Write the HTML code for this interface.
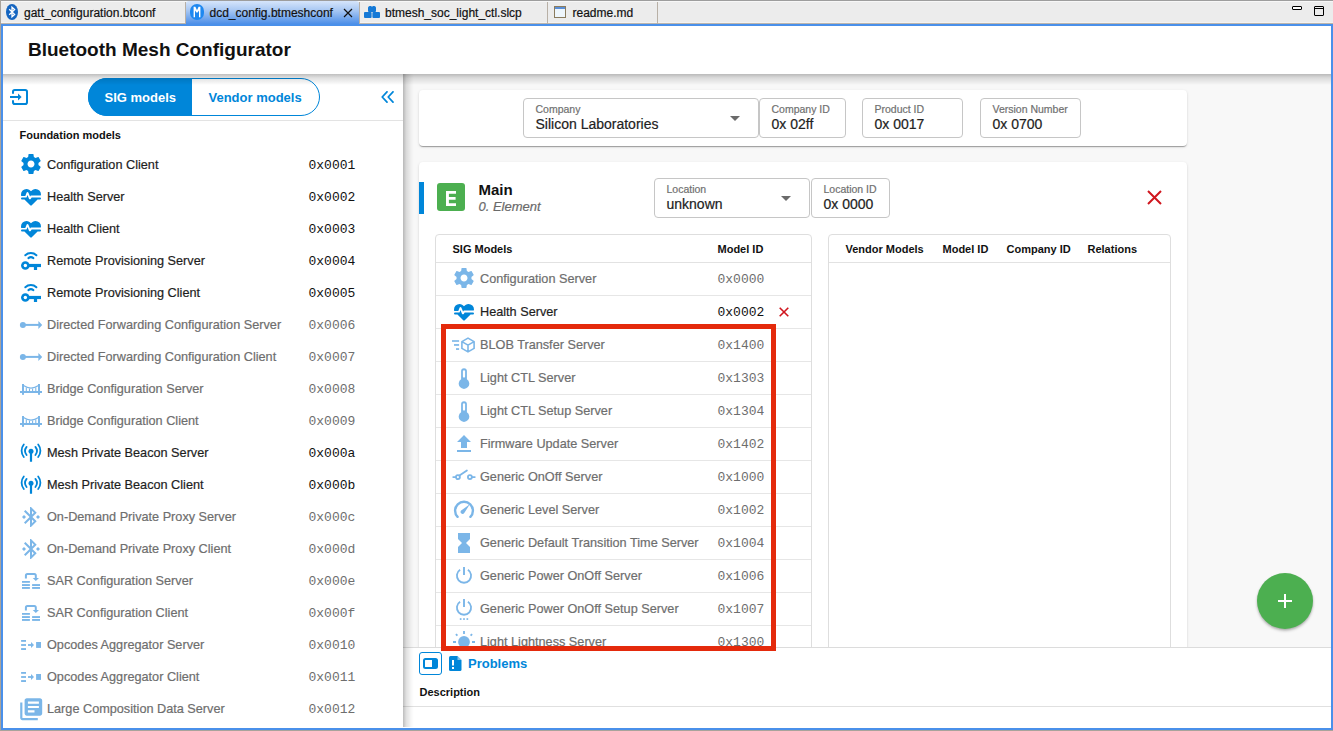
<!DOCTYPE html><html><head><meta charset="utf-8"><title>Bluetooth Mesh Configurator</title><style>
html,body{margin:0;padding:0}
body{width:1333px;height:731px;position:relative;overflow:hidden;background:#ececec;font-family:"Liberation Sans",sans-serif}
.a{position:absolute;display:block}
.t{position:absolute;white-space:nowrap}
.n{-webkit-text-stroke:0.2px currentColor}
</style></head><body>
<div class="a" style="left:0px;top:0px;width:1333px;height:731px;background:#ececec"></div>
<div class="a" style="left:0px;top:0px;width:1333px;height:1px;background:#9d9d9d"></div>
<div class="a" style="left:1px;top:1px;width:1332px;height:1px;background:#f7f7f7"></div>
<div class="a" style="left:0px;top:0px;width:1px;height:731px;background:#a9a39b"></div>
<div class="a" style="left:0px;top:730px;width:1333px;height:1px;background:#a9a39b"></div>
<div class="a" style="left:1px;top:22px;width:1332px;height:1px;background:#f3f3f3"></div>
<div class="a" style="left:1px;top:23px;width:1332px;height:1px;background:#bdb5ab"></div>
<div class="a" style="left:185px;top:2px;width:1px;height:22px;background:#b8b0a6"></div>
<div class="a" style="left:359px;top:2px;width:1px;height:22px;background:#b8b0a6"></div>
<div class="a" style="left:547px;top:2px;width:1px;height:22px;background:#b8b0a6"></div>
<div class="a" style="left:657px;top:2px;width:1px;height:22px;background:#b8b0a6"></div>
<div class="a" style="left:186px;top:1px;width:173px;height:23px;background:linear-gradient(#d6e5fb 0%,#a9c8f3 40%,#4d8fe8 100%);border-top-left-radius:3px;border-top-right-radius:3px"></div>
<svg class="a" style="left:6px;top:4px;" width="12" height="16" viewBox="0 0 12 16"><ellipse cx="6" cy="8" rx="6" ry="8" fill="#1565c0"/><path d="M3.2 5.3L8.6 10.4L6 12.8V3.2L8.6 5.6L3.2 10.7" fill="none" stroke="#fff" stroke-width="1.3"/></svg>
<div class="t n" style="left:24px;top:7px;font-size:12px;line-height:12px;font-weight:normal;font-style:normal;color:#111;font-family:'Liberation Sans', sans-serif;">gatt_configuration.btconf</div>
<svg class="a" style="left:190px;top:4px;" width="14" height="16" viewBox="0 0 14 16"><rect x="0" y="0" width="14" height="16" rx="7" ry="7" fill="#1e88f0"/><path d="M3.6 13.2V2.8H5.4L7 6.3L8.6 2.8H10.4V13.2H9V6.6L7.6 8.6H6.4L5 6.6V13.2Z" fill="#fff"/></svg>
<div class="t n" style="left:209.5px;top:7px;font-size:12px;line-height:12px;font-weight:normal;font-style:normal;color:#111;font-family:'Liberation Sans', sans-serif;">dcd_config.btmeshconf</div>
<svg class="a" style="left:343px;top:8px;" width="10" height="10" viewBox="0 0 10 10"><path d="M1 1L9 9M9 1L1 9" stroke="#111" stroke-width="1.2"/></svg>
<svg class="a" style="left:364px;top:6px;" width="16" height="12" viewBox="0 0 16 12"><rect x="4" y="0.6" width="8" height="5.4" rx="1" fill="#1579d6"/><rect x="0" y="6" width="7.6" height="6" rx="1" fill="#1579d6"/><rect x="8.4" y="6" width="7.6" height="6" rx="1" fill="#1579d6"/><rect x="5.2" y="0" width="2" height="1.2" fill="#1579d6"/><rect x="8.8" y="0" width="2" height="1.2" fill="#1579d6"/></svg>
<div class="t n" style="left:385px;top:7px;font-size:12px;line-height:12px;font-weight:normal;font-style:normal;color:#111;font-family:'Liberation Sans', sans-serif;">btmesh_soc_light_ctl.slcp</div>
<svg class="a" style="left:554px;top:6px;" width="12" height="12" viewBox="0 0 12 12"><rect x="0.5" y="0.5" width="11" height="11" fill="#eef6fc" stroke="#8a7b5e"/><rect x="1" y="1" width="10" height="2" fill="#5b8fd6"/></svg>
<div class="t n" style="left:572.5px;top:7px;font-size:12px;line-height:12px;font-weight:normal;font-style:normal;color:#111;font-family:'Liberation Sans', sans-serif;">readme.md</div>
<div class="a" style="left:1292px;top:6px;width:10px;height:4px;box-sizing:border-box;border:1.3px solid #000;background:#fff;border-radius:1px"></div>
<div class="a" style="left:1314px;top:6px;width:10px;height:10px;box-sizing:border-box;border:1.3px solid #000;background:#ececec;border-radius:1px"></div>
<div class="a" style="left:1315px;top:8.3px;width:8px;height:1.2px;background:#000"></div>
<div class="a" style="left:1px;top:24px;width:1332px;height:706px;box-sizing:border-box;border:2px solid #4a90ea;background:#fff"></div>
<div class="a" style="left:403px;top:74px;width:928px;height:573px;background:#f8f8f8"></div>
<div class="a" style="left:403px;top:647px;width:928px;height:80px;background:#fff;border-top:1px solid #dcdcdc;box-sizing:border-box"></div>
<div class="a" style="left:403px;top:706px;width:928px;height:1px;background:#e0e0e0"></div>
<div class="a" style="left:403px;top:74px;width:928px;height:573px;overflow:hidden;"><div class="a" style="left:-403px;top:-74px;width:1333px;height:731px">
<div class="a" style="left:419px;top:90px;width:768px;height:56px;background:#fff;border-radius:4px;box-shadow:0 2px 1px -1px rgba(0,0,0,.2),0 1px 1px 0 rgba(0,0,0,.14),0 1px 3px 0 rgba(0,0,0,.12)"></div>
<div class="a" style="left:523px;top:98px;width:236px;height:40px;box-sizing:border-box;border:1px solid #c6c6c6;border-radius:4px;background:#fff"></div>
<div class="t n" style="left:535.5px;top:104px;font-size:10.5px;line-height:10.5px;font-weight:normal;font-style:normal;color:#707070;font-family:'Liberation Sans', sans-serif;">Company</div>
<div class="t n" style="left:535.5px;top:117px;font-size:14px;line-height:14px;font-weight:normal;font-style:normal;color:#222;font-family:'Liberation Sans', sans-serif;">Silicon Laboratories</div>
<svg class="a" style="left:730px;top:115.5px;" width="10" height="5" viewBox="0 0 10 5"><path d="M0 0H10L5 5Z" fill="#6b6b6b"/></svg>
<div class="a" style="left:759px;top:98px;width:87px;height:40px;box-sizing:border-box;border:1px solid #c6c6c6;border-radius:4px;background:#fff"></div>
<div class="t n" style="left:771.5px;top:104px;font-size:10.5px;line-height:10.5px;font-weight:normal;font-style:normal;color:#707070;font-family:'Liberation Sans', sans-serif;">Company ID</div>
<div class="t n" style="left:771.5px;top:117px;font-size:14px;line-height:14px;font-weight:normal;font-style:normal;color:#222;font-family:'Liberation Sans', sans-serif;">0x 02ff</div>
<div class="a" style="left:862px;top:98px;width:101px;height:40px;box-sizing:border-box;border:1px solid #c6c6c6;border-radius:4px;background:#fff"></div>
<div class="t n" style="left:874.5px;top:104px;font-size:10.5px;line-height:10.5px;font-weight:normal;font-style:normal;color:#707070;font-family:'Liberation Sans', sans-serif;">Product ID</div>
<div class="t n" style="left:874.5px;top:117px;font-size:14px;line-height:14px;font-weight:normal;font-style:normal;color:#222;font-family:'Liberation Sans', sans-serif;">0x 0017</div>
<div class="a" style="left:980px;top:98px;width:101px;height:40px;box-sizing:border-box;border:1px solid #c6c6c6;border-radius:4px;background:#fff"></div>
<div class="t n" style="left:992.5px;top:104px;font-size:10.5px;line-height:10.5px;font-weight:normal;font-style:normal;color:#707070;font-family:'Liberation Sans', sans-serif;">Version Number</div>
<div class="t n" style="left:992.5px;top:117px;font-size:14px;line-height:14px;font-weight:normal;font-style:normal;color:#222;font-family:'Liberation Sans', sans-serif;">0x 0700</div>
<div class="a" style="left:419px;top:162px;width:768px;height:700px;background:#fff;border-radius:4px;box-shadow:0 2px 1px -1px rgba(0,0,0,.2),0 1px 1px 0 rgba(0,0,0,.14),0 1px 3px 0 rgba(0,0,0,.12)"></div>
<div class="a" style="left:419px;top:182px;width:5px;height:32px;background:#0086d9"></div>
<div class="a" style="left:437px;top:183px;width:28px;height:28px;background:#4caf50;border-radius:3px"></div>
<svg class="a" style="left:445.5px;top:190.5px;" width="10.5" height="15" viewBox="0 0 10.5 15"><path d="M0 0H10.5V2.7H2.9V6.1H9.6V8.8H2.9V12.3H10.5V15H0Z" fill="#fff"/></svg>
<div class="t" style="left:478.5px;top:182px;font-size:15px;line-height:15px;font-weight:bold;font-style:normal;color:#111;font-family:'Liberation Sans', sans-serif;">Main</div>
<div class="t n" style="left:478.5px;top:200px;font-size:13px;line-height:13px;font-weight:normal;font-style:italic;color:#6a6a6a;font-family:'Liberation Sans', sans-serif;">0. Element</div>
<div class="a" style="left:654px;top:178px;width:156px;height:40px;box-sizing:border-box;border:1px solid #c6c6c6;border-radius:4px;background:#fff"></div>
<div class="t n" style="left:666.5px;top:184px;font-size:10.5px;line-height:10.5px;font-weight:normal;font-style:normal;color:#707070;font-family:'Liberation Sans', sans-serif;">Location</div>
<div class="t n" style="left:666.5px;top:197px;font-size:14px;line-height:14px;font-weight:normal;font-style:normal;color:#222;font-family:'Liberation Sans', sans-serif;">unknown</div>
<svg class="a" style="left:781px;top:195.5px;" width="10" height="5" viewBox="0 0 10 5"><path d="M0 0H10L5 5Z" fill="#6b6b6b"/></svg>
<div class="a" style="left:811px;top:178px;width:79px;height:40px;box-sizing:border-box;border:1px solid #c6c6c6;border-radius:4px;background:#fff"></div>
<div class="t n" style="left:823.5px;top:184px;font-size:10.5px;line-height:10.5px;font-weight:normal;font-style:normal;color:#707070;font-family:'Liberation Sans', sans-serif;">Location ID</div>
<div class="t n" style="left:823.5px;top:197px;font-size:14px;line-height:14px;font-weight:normal;font-style:normal;color:#222;font-family:'Liberation Sans', sans-serif;">0x 0000</div>
<svg class="a" style="left:1147px;top:190px;" width="15" height="15" viewBox="0 0 15 15"><path d="M1 1L14 14M14 1L1 14" stroke="#d0161e" stroke-width="2"/></svg>
<div class="a" style="left:435px;top:234px;width:377px;height:500px;box-sizing:border-box;border:1px solid #dedede;border-radius:4px;background:#fff"></div>
<div class="t" style="left:452.5px;top:244px;font-size:11px;line-height:11px;font-weight:bold;font-style:normal;color:#111;font-family:'Liberation Sans', sans-serif;">SIG Models</div>
<div class="t" style="left:717.5px;top:244px;font-size:11px;line-height:11px;font-weight:bold;font-style:normal;color:#111;font-family:'Liberation Sans', sans-serif;">Model ID</div>
<div class="a" style="left:436px;top:262px;width:375px;height:1px;background:#e2e2e2"></div>
<div class="a" style="left:436px;top:295px;width:375px;height:1px;background:#e6e6e6"></div>
<svg class="a" style="left:452px;top:266px" width="24" height="24" viewBox="0 0 24 24" fill="#7bb6e8" stroke="#7bb6e8" stroke-width="0"><path d="M19.43 12.98c.04-.32.07-.64.07-.98s-.03-.66-.07-.98l2.11-1.65c.19-.15.24-.42.12-.64l-2-3.46c-.12-.22-.39-.3-.61-.22l-2.49 1c-.52-.4-1.08-.73-1.69-.98l-.38-2.65C14.460 2.18 14.25 2 14 2h-4c-.25 0-.46.18-.49.42l-.38 2.650c-.61.25-1.17.59-1.69.98l-2.49-1c-.23-.09-.49 0-.61.22l-2 3.46c-.13.22-.07.49.12.64l2.11 1.65c-.04.32-.07.65-.07.98s.03.66.07.98l-2.11 1.65c-.19.15-.24.42-.12.64l2 3.46c.12.22.39.3.61.22l2.49-1c.52.4 1.08.73 1.69.98l.38 2.65c.03.24.24.42.49.42h4c.25 0 .46-.18.49-.42l.38-2.65c.61-.25 1.17-.59 1.690-.98l2.49 1c.23.09.49 0 .61-.22l2-3.46c.12-.22.07-.49-.12-.64l-2.11-1.65zM12 15.5c-1.93 0-3.5-1.57-3.5-3.5s1.57-3.5 3.5-3.5 3.5 1.57 3.5 3.5-1.57 3.5-3.5 3.5z"/></svg>
<div class="t n" style="left:480px;top:273px;font-size:12.7px;line-height:12.7px;font-weight:normal;font-style:normal;color:#6e6e6e;font-family:'Liberation Sans', sans-serif;">Configuration Server</div>
<div class="t" style="left:717.5px;top:273px;font-size:13px;line-height:13px;font-weight:normal;font-style:normal;color:#6e6e6e;font-family:'Liberation Mono', monospace;">0x0000</div>
<div class="a" style="left:436px;top:328px;width:375px;height:1px;background:#e6e6e6"></div>
<svg class="a" style="left:452px;top:299px" width="24" height="24" viewBox="0 0 24 24" fill="#0086d9" stroke="#0086d9" stroke-width="0"><g transform="translate(0,1)"><path d="M7.5,4A5.5,5.5 0 0,0 2,9.5C2,10 2.09,10.5 2.22,11H6.3L7.57,7.63C7.87,6.83 9.05,6.75 9.44,7.63L11.03,11.59L11.5,10.9C11.67,10.7 11.89,10.5 12.16,10.5H21.78C21.91,10 22,9.5 22,9.5A5.5,5.5 0 0,0 16.5,4C14.64,4 13,4.93 12,6.34C11,4.93 9.36,4 7.5,4V4M3,12.5A1,1 0 0,0 2,13.5A1,1 0 0,0 3,14.5H5.44L11,20C12,20.9 12,20.9 13,20L18.56,14.5H21A1,1 0 0,0 22,13.5A1,1 0 0,0 21,12.5H12.66L11.73,13.89C11.28,14.55 10.28,14.46 9.97,13.74L8.5,10.04L7.66,12.19C7.5,12.44 7.24,12.5 7,12.5H3Z"/></g></svg>
<div class="t n" style="left:480px;top:306px;font-size:12.7px;line-height:12.7px;font-weight:normal;font-style:normal;color:#1e1e1e;font-family:'Liberation Sans', sans-serif;">Health Server</div>
<div class="t" style="left:717.5px;top:306px;font-size:13px;line-height:13px;font-weight:normal;font-style:normal;color:#111;font-family:'Liberation Mono', monospace;">0x0002</div>
<svg class="a" style="left:779px;top:306.5px;" width="10" height="10" viewBox="0 0 10 10"><path d="M0.7 0.7L9.3 9.3M9.3 0.7L0.7 9.3" stroke="#d0161e" stroke-width="1.6"/></svg>
<div class="a" style="left:436px;top:361px;width:375px;height:1px;background:#e6e6e6"></div>
<svg class="a" style="left:452px;top:332px" width="24" height="24" viewBox="0 0 24 24" fill="#7bb6e8" stroke="#7bb6e8" stroke-width="0"><rect x="0" y="8.2" width="7.1" height="1.6"/><rect x="2" y="12.1" width="5.1" height="1.7"/><rect x="4" y="16.2" width="3.1" height="1.7"/><path d="M16 6.1L22.1 9.6V16.4L16 19.9L9.9 16.4V9.6Z M9.9 9.6L16 13.1L22.1 9.6 M16 13.1V19.9" fill="none" stroke-width="1.6" stroke-linejoin="round"/></svg>
<div class="t n" style="left:480px;top:339px;font-size:12.7px;line-height:12.7px;font-weight:normal;font-style:normal;color:#6e6e6e;font-family:'Liberation Sans', sans-serif;">BLOB Transfer Server</div>
<div class="t" style="left:717.5px;top:339px;font-size:13px;line-height:13px;font-weight:normal;font-style:normal;color:#6e6e6e;font-family:'Liberation Mono', monospace;">0x1400</div>
<div class="a" style="left:436px;top:394px;width:375px;height:1px;background:#e6e6e6"></div>
<svg class="a" style="left:452px;top:365px" width="24" height="24" viewBox="0 0 24 24" fill="#7bb6e8" stroke="#7bb6e8" stroke-width="0"><path d="M12 3.2a2.9 2.9 0 0 1 2.9 2.9V14.2A5.3 5.3 0 1 1 9.1 14.2V6.1A2.9 2.9 0 0 1 12 3.2z"/><rect x="10.9" y="5.3" width="2.2" height="7.4" rx="1.1" fill="#fff"/></svg>
<div class="t n" style="left:480px;top:372px;font-size:12.7px;line-height:12.7px;font-weight:normal;font-style:normal;color:#6e6e6e;font-family:'Liberation Sans', sans-serif;">Light CTL Server</div>
<div class="t" style="left:717.5px;top:372px;font-size:13px;line-height:13px;font-weight:normal;font-style:normal;color:#6e6e6e;font-family:'Liberation Mono', monospace;">0x1303</div>
<div class="a" style="left:436px;top:427px;width:375px;height:1px;background:#e6e6e6"></div>
<svg class="a" style="left:452px;top:398px" width="24" height="24" viewBox="0 0 24 24" fill="#7bb6e8" stroke="#7bb6e8" stroke-width="0"><path d="M12 3.2a2.9 2.9 0 0 1 2.9 2.9V14.2A5.3 5.3 0 1 1 9.1 14.2V6.1A2.9 2.9 0 0 1 12 3.2z"/><rect x="10.9" y="5.3" width="2.2" height="7.4" rx="1.1" fill="#fff"/></svg>
<div class="t n" style="left:480px;top:405px;font-size:12.7px;line-height:12.7px;font-weight:normal;font-style:normal;color:#6e6e6e;font-family:'Liberation Sans', sans-serif;">Light CTL Setup Server</div>
<div class="t" style="left:717.5px;top:405px;font-size:13px;line-height:13px;font-weight:normal;font-style:normal;color:#6e6e6e;font-family:'Liberation Mono', monospace;">0x1304</div>
<div class="a" style="left:436px;top:460px;width:375px;height:1px;background:#e6e6e6"></div>
<svg class="a" style="left:452px;top:431px" width="24" height="24" viewBox="0 0 24 24" fill="#7bb6e8" stroke="#7bb6e8" stroke-width="0"><path d="M9 17h6v-6h4l-7-7-7 7h4zm-4 2h14v2H5z"/></svg>
<div class="t n" style="left:480px;top:438px;font-size:12.7px;line-height:12.7px;font-weight:normal;font-style:normal;color:#6e6e6e;font-family:'Liberation Sans', sans-serif;">Firmware Update Server</div>
<div class="t" style="left:717.5px;top:438px;font-size:13px;line-height:13px;font-weight:normal;font-style:normal;color:#6e6e6e;font-family:'Liberation Mono', monospace;">0x1402</div>
<div class="a" style="left:436px;top:493px;width:375px;height:1px;background:#e6e6e6"></div>
<svg class="a" style="left:452px;top:464px" width="24" height="24" viewBox="0 0 24 24" fill="#7bb6e8" stroke="#7bb6e8" stroke-width="0"><path d="M1.2 13.1H3.8M20.1 13.1H22.8M7.4 11.6L14.9 6.4" fill="none" stroke-width="1.8" stroke-linecap="round"/><circle cx="5.9" cy="13.1" r="2" fill="none" stroke-width="1.8"/><circle cx="17.9" cy="13.1" r="2" fill="none" stroke-width="1.8"/></svg>
<div class="t n" style="left:480px;top:471px;font-size:12.7px;line-height:12.7px;font-weight:normal;font-style:normal;color:#6e6e6e;font-family:'Liberation Sans', sans-serif;">Generic OnOff Server</div>
<div class="t" style="left:717.5px;top:471px;font-size:13px;line-height:13px;font-weight:normal;font-style:normal;color:#6e6e6e;font-family:'Liberation Mono', monospace;">0x1000</div>
<div class="a" style="left:436px;top:526px;width:375px;height:1px;background:#e6e6e6"></div>
<svg class="a" style="left:452px;top:497px" width="24" height="24" viewBox="0 0 24 24" fill="#7bb6e8" stroke="#7bb6e8" stroke-width="0"><path d="M5.6 19.8A8.9 8.9 0 1 1 18.4 19.8" fill="none" stroke-width="2.4" stroke-linecap="round"/><path d="M17.8 7.2L12.6 15.6A2.1 2.1 0 1 1 9.9 12.9Z"/></svg>
<div class="t n" style="left:480px;top:504px;font-size:12.7px;line-height:12.7px;font-weight:normal;font-style:normal;color:#6e6e6e;font-family:'Liberation Sans', sans-serif;">Generic Level Server</div>
<div class="t" style="left:717.5px;top:504px;font-size:13px;line-height:13px;font-weight:normal;font-style:normal;color:#6e6e6e;font-family:'Liberation Mono', monospace;">0x1002</div>
<div class="a" style="left:436px;top:559px;width:375px;height:1px;background:#e6e6e6"></div>
<svg class="a" style="left:452px;top:530px" width="24" height="24" viewBox="0 0 24 24" fill="#7bb6e8" stroke="#7bb6e8" stroke-width="0"><path transform="translate(0,1)" d="M6 2v6h.01L6 8.01 10 12l-4 4 .01.01H6V22h12v-5.99h-.01L18 16l-4-4 4-3.99-.01-.01H18V2H6z"/></svg>
<div class="t n" style="left:480px;top:537px;font-size:12.7px;line-height:12.7px;font-weight:normal;font-style:normal;color:#6e6e6e;font-family:'Liberation Sans', sans-serif;">Generic Default Transition Time Server</div>
<div class="t" style="left:717.5px;top:537px;font-size:13px;line-height:13px;font-weight:normal;font-style:normal;color:#6e6e6e;font-family:'Liberation Mono', monospace;">0x1004</div>
<div class="a" style="left:436px;top:592px;width:375px;height:1px;background:#e6e6e6"></div>
<svg class="a" style="left:452px;top:563px" width="24" height="24" viewBox="0 0 24 24" fill="#7bb6e8" stroke="#7bb6e8" stroke-width="0"><path d="M8.1 6.7A7.1 7.1 0 1 0 15.9 6.7" fill="none" stroke-width="1.8"/><path d="M12 3.9V12" fill="none" stroke-width="1.9"/></svg>
<div class="t n" style="left:480px;top:570px;font-size:12.7px;line-height:12.7px;font-weight:normal;font-style:normal;color:#6e6e6e;font-family:'Liberation Sans', sans-serif;">Generic Power OnOff Server</div>
<div class="t" style="left:717.5px;top:570px;font-size:13px;line-height:13px;font-weight:normal;font-style:normal;color:#6e6e6e;font-family:'Liberation Mono', monospace;">0x1006</div>
<div class="a" style="left:436px;top:625px;width:375px;height:1px;background:#e6e6e6"></div>
<svg class="a" style="left:452px;top:596px" width="24" height="24" viewBox="0 0 24 24" fill="#7bb6e8" stroke="#7bb6e8" stroke-width="0"><path d="M8.1 5.7A7.1 7.1 0 1 0 15.9 5.7" fill="none" stroke-width="1.8"/><path d="M12 2.9V11" fill="none" stroke-width="1.9"/><rect x="7.8" y="22.2" width="1.7" height="1.7"/><rect x="11.15" y="22.2" width="1.7" height="1.7"/><rect x="14.5" y="22.2" width="1.7" height="1.7"/></svg>
<div class="t n" style="left:480px;top:603px;font-size:12.7px;line-height:12.7px;font-weight:normal;font-style:normal;color:#6e6e6e;font-family:'Liberation Sans', sans-serif;">Generic Power OnOff Setup Server</div>
<div class="t" style="left:717.5px;top:603px;font-size:13px;line-height:13px;font-weight:normal;font-style:normal;color:#6e6e6e;font-family:'Liberation Mono', monospace;">0x1007</div>
<div class="a" style="left:436px;top:658px;width:375px;height:1px;background:#e6e6e6"></div>
<svg class="a" style="left:452px;top:629px" width="24" height="24" viewBox="0 0 24 24" fill="#7bb6e8" stroke="#7bb6e8" stroke-width="0"><circle cx="12" cy="13" r="5.9"/><path d="M12 2V4.9M3.9 5.2L5.4 6.7M20.1 5.2L18.6 6.7M1 13H4M20 13H23" fill="none" stroke-width="1.8"/></svg>
<div class="t n" style="left:480px;top:636px;font-size:12.7px;line-height:12.7px;font-weight:normal;font-style:normal;color:#6e6e6e;font-family:'Liberation Sans', sans-serif;">Light Lightness Server</div>
<div class="t" style="left:717.5px;top:636px;font-size:13px;line-height:13px;font-weight:normal;font-style:normal;color:#6e6e6e;font-family:'Liberation Mono', monospace;">0x1300</div>
<div class="a" style="left:828px;top:234px;width:343px;height:500px;box-sizing:border-box;border:1px solid #dedede;border-radius:4px;background:#fff"></div>
<div class="t" style="left:845.5px;top:244px;font-size:11px;line-height:11px;font-weight:bold;font-style:normal;color:#111;font-family:'Liberation Sans', sans-serif;">Vendor Models</div>
<div class="t" style="left:942.5px;top:244px;font-size:11px;line-height:11px;font-weight:bold;font-style:normal;color:#111;font-family:'Liberation Sans', sans-serif;">Model ID</div>
<div class="t" style="left:1006.5px;top:244px;font-size:11px;line-height:11px;font-weight:bold;font-style:normal;color:#111;font-family:'Liberation Sans', sans-serif;">Company ID</div>
<div class="t" style="left:1087.5px;top:244px;font-size:11px;line-height:11px;font-weight:bold;font-style:normal;color:#111;font-family:'Liberation Sans', sans-serif;">Relations</div>
<div class="a" style="left:829px;top:262px;width:341px;height:1px;background:#e2e2e2"></div>
<div class="a" style="left:1257px;top:573px;width:56px;height:56px;background:#4caf50;border-radius:50%;box-shadow:0 2px 3px rgba(0,0,0,.22),0 1px 2px rgba(0,0,0,.12)"></div>
<svg class="a" style="left:1278px;top:594px;" width="14" height="14" viewBox="0 0 14 14"><path d="M7 0V14M0 7H14" stroke="#fff" stroke-width="2"/></svg>
</div></div>
<div class="a" style="left:3px;top:74px;width:400px;height:653px;background:#fff"></div>
<div class="a" style="left:403px;top:74px;width:11px;height:653px;background:linear-gradient(90deg,rgba(0,0,0,.26),rgba(0,0,0,.12) 30%,rgba(0,0,0,.03) 75%,rgba(0,0,0,0))"></div>
<svg class="a" style="left:10px;top:89px;" width="18" height="16" viewBox="0 0 18 16"><path d="M3 4.7V2.8Q3 1 4.8 1H15.2Q17 1 17 2.8V13.2Q17 15 15.2 15H4.8Q3 15 3 13.2V11.3" fill="none" stroke="#0086d9" stroke-width="2"/><path d="M0 8H9.5" stroke="#0086d9" stroke-width="2"/><path d="M8 4.4L11.6 8L8 11.6Z" fill="#0086d9"/></svg>
<div class="a" style="left:88px;top:78px;width:232px;height:38px;box-sizing:border-box;border:1px solid #0086d9;border-radius:19px;background:#fff;overflow:hidden"></div>
<div class="a" style="left:88px;top:78px;width:104px;height:38px;background:#0086d9;border-radius:19px 0 0 19px"></div>
<div class="t" style="left:104.5px;top:91px;font-size:13px;line-height:13px;font-weight:bold;font-style:normal;color:#fff;font-family:'Liberation Sans', sans-serif;">SIG models</div>
<div class="t" style="left:208.5px;top:91px;font-size:13px;line-height:13px;font-weight:bold;font-style:normal;color:#0086d9;font-family:'Liberation Sans', sans-serif;">Vendor models</div>
<svg class="a" style="left:381px;top:91px;" width="13" height="12" viewBox="0 0 13 12"><path d="M6 0.8L1.2 6L6 11.2M12 0.8L7.2 6L12 11.2" fill="none" stroke="#0086d9" stroke-width="1.7" stroke-linecap="round" stroke-linejoin="round"/></svg>
<div class="a" style="left:3px;top:120px;width:400px;height:1px;background:#e3e3e3"></div>
<div class="t" style="left:19.5px;top:130px;font-size:11px;line-height:11px;font-weight:bold;font-style:normal;color:#111;font-family:'Liberation Sans', sans-serif;">Foundation models</div>
<svg class="a" style="left:19px;top:152px" width="24" height="24" viewBox="0 0 24 24" fill="#0086d9" stroke="#0086d9" stroke-width="0"><path d="M19.43 12.98c.04-.32.07-.64.07-.98s-.03-.66-.07-.98l2.11-1.65c.19-.15.24-.42.12-.64l-2-3.46c-.12-.22-.39-.3-.61-.22l-2.49 1c-.52-.4-1.08-.73-1.69-.98l-.38-2.65C14.460 2.18 14.25 2 14 2h-4c-.25 0-.46.18-.49.42l-.38 2.650c-.61.25-1.17.59-1.69.98l-2.49-1c-.23-.09-.49 0-.61.22l-2 3.46c-.13.22-.07.49.12.64l2.11 1.65c-.04.32-.07.65-.07.98s.03.66.07.98l-2.11 1.65c-.19.15-.24.42-.12.64l2 3.46c.12.22.39.3.61.22l2.49-1c.52.4 1.08.73 1.69.98l.38 2.65c.03.24.24.42.49.42h4c.25 0 .46-.18.49-.42l.38-2.65c.61-.25 1.17-.59 1.690-.98l2.49 1c.23.09.49 0 .61-.22l2-3.46c.12-.22.07-.49-.12-.64l-2.11-1.65zM12 15.5c-1.93 0-3.5-1.57-3.5-3.5s1.57-3.5 3.5-3.5 3.5 1.57 3.5 3.5-1.57 3.5-3.5 3.5z"/></svg>
<div class="t n" style="left:47px;top:159px;font-size:12.7px;line-height:12.7px;font-weight:normal;font-style:normal;color:#1e1e1e;font-family:'Liberation Sans', sans-serif;">Configuration Client</div>
<div class="t" style="left:308.5px;top:159px;font-size:13px;line-height:13px;font-weight:normal;font-style:normal;color:#111;font-family:'Liberation Mono', monospace;">0x0001</div>
<svg class="a" style="left:19px;top:184px" width="24" height="24" viewBox="0 0 24 24" fill="#0086d9" stroke="#0086d9" stroke-width="0"><g transform="translate(0,1)"><path d="M7.5,4A5.5,5.5 0 0,0 2,9.5C2,10 2.09,10.5 2.22,11H6.3L7.57,7.63C7.87,6.83 9.05,6.75 9.44,7.63L11.03,11.59L11.5,10.9C11.67,10.7 11.89,10.5 12.16,10.5H21.78C21.91,10 22,9.5 22,9.5A5.5,5.5 0 0,0 16.5,4C14.64,4 13,4.93 12,6.34C11,4.93 9.36,4 7.5,4V4M3,12.5A1,1 0 0,0 2,13.5A1,1 0 0,0 3,14.5H5.44L11,20C12,20.9 12,20.9 13,20L18.56,14.5H21A1,1 0 0,0 22,13.5A1,1 0 0,0 21,12.5H12.66L11.73,13.89C11.28,14.55 10.28,14.46 9.97,13.74L8.5,10.04L7.66,12.19C7.5,12.44 7.24,12.5 7,12.5H3Z"/></g></svg>
<div class="t n" style="left:47px;top:191px;font-size:12.7px;line-height:12.7px;font-weight:normal;font-style:normal;color:#1e1e1e;font-family:'Liberation Sans', sans-serif;">Health Server</div>
<div class="t" style="left:308.5px;top:191px;font-size:13px;line-height:13px;font-weight:normal;font-style:normal;color:#111;font-family:'Liberation Mono', monospace;">0x0002</div>
<svg class="a" style="left:19px;top:216px" width="24" height="24" viewBox="0 0 24 24" fill="#0086d9" stroke="#0086d9" stroke-width="0"><g transform="translate(0,1)"><path d="M7.5,4A5.5,5.5 0 0,0 2,9.5C2,10 2.09,10.5 2.22,11H6.3L7.57,7.63C7.87,6.83 9.05,6.75 9.44,7.63L11.03,11.59L11.5,10.9C11.67,10.7 11.89,10.5 12.16,10.5H21.78C21.91,10 22,9.5 22,9.5A5.5,5.5 0 0,0 16.5,4C14.64,4 13,4.93 12,6.34C11,4.93 9.36,4 7.5,4V4M3,12.5A1,1 0 0,0 2,13.5A1,1 0 0,0 3,14.5H5.44L11,20C12,20.9 12,20.9 13,20L18.56,14.5H21A1,1 0 0,0 22,13.5A1,1 0 0,0 21,12.5H12.66L11.73,13.89C11.28,14.55 10.28,14.46 9.97,13.74L8.5,10.04L7.66,12.19C7.5,12.44 7.24,12.5 7,12.5H3Z"/></g></svg>
<div class="t n" style="left:47px;top:223px;font-size:12.7px;line-height:12.7px;font-weight:normal;font-style:normal;color:#1e1e1e;font-family:'Liberation Sans', sans-serif;">Health Client</div>
<div class="t" style="left:308.5px;top:223px;font-size:13px;line-height:13px;font-weight:normal;font-style:normal;color:#111;font-family:'Liberation Mono', monospace;">0x0003</div>
<svg class="a" style="left:19px;top:248px" width="24" height="24" viewBox="0 0 24 24" fill="#0086d9" stroke="#0086d9" stroke-width="0"><circle cx="6.35" cy="17.45" r="4.3"/><circle cx="6.35" cy="17.45" r="1.7" fill="#fff"/><rect x="9" y="15.9" width="13" height="3.2"/><rect x="14.9" y="18" width="3.2" height="4"/><path d="M6.3 7.3A8.1 8.1 0 0 1 17.4 7.3" fill="none" stroke-width="2" stroke-linecap="round"/><path d="M9.4 10.1A4.1 4.1 0 0 1 14.4 10.1" fill="none" stroke-width="2" stroke-linecap="round"/></svg>
<div class="t n" style="left:47px;top:255px;font-size:12.7px;line-height:12.7px;font-weight:normal;font-style:normal;color:#1e1e1e;font-family:'Liberation Sans', sans-serif;">Remote Provisioning Server</div>
<div class="t" style="left:308.5px;top:255px;font-size:13px;line-height:13px;font-weight:normal;font-style:normal;color:#111;font-family:'Liberation Mono', monospace;">0x0004</div>
<svg class="a" style="left:19px;top:280px" width="24" height="24" viewBox="0 0 24 24" fill="#0086d9" stroke="#0086d9" stroke-width="0"><circle cx="6.35" cy="17.45" r="4.3"/><circle cx="6.35" cy="17.45" r="1.7" fill="#fff"/><rect x="9" y="15.9" width="13" height="3.2"/><rect x="14.9" y="18" width="3.2" height="4"/><path d="M6.3 7.3A8.1 8.1 0 0 1 17.4 7.3" fill="none" stroke-width="2" stroke-linecap="round"/><path d="M9.4 10.1A4.1 4.1 0 0 1 14.4 10.1" fill="none" stroke-width="2" stroke-linecap="round"/></svg>
<div class="t n" style="left:47px;top:287px;font-size:12.7px;line-height:12.7px;font-weight:normal;font-style:normal;color:#1e1e1e;font-family:'Liberation Sans', sans-serif;">Remote Provisioning Client</div>
<div class="t" style="left:308.5px;top:287px;font-size:13px;line-height:13px;font-weight:normal;font-style:normal;color:#111;font-family:'Liberation Mono', monospace;">0x0005</div>
<svg class="a" style="left:19px;top:312px" width="24" height="24" viewBox="0 0 24 24" fill="#7bb6e8" stroke="#7bb6e8" stroke-width="0"><circle cx="3.9" cy="12.9" r="3"/><path d="M4 12.9H20" fill="none" stroke-width="2"/><path d="M19.4 8.9L23.2 12.9L19.4 16.9Z"/></svg>
<div class="t n" style="left:47px;top:319px;font-size:12.7px;line-height:12.7px;font-weight:normal;font-style:normal;color:#6e6e6e;font-family:'Liberation Sans', sans-serif;">Directed Forwarding Configuration Server</div>
<div class="t" style="left:308.5px;top:319px;font-size:13px;line-height:13px;font-weight:normal;font-style:normal;color:#6e6e6e;font-family:'Liberation Mono', monospace;">0x0006</div>
<svg class="a" style="left:19px;top:344px" width="24" height="24" viewBox="0 0 24 24" fill="#7bb6e8" stroke="#7bb6e8" stroke-width="0"><circle cx="3.9" cy="12.9" r="3"/><path d="M4 12.9H20" fill="none" stroke-width="2"/><path d="M19.4 8.9L23.2 12.9L19.4 16.9Z"/></svg>
<div class="t n" style="left:47px;top:351px;font-size:12.7px;line-height:12.7px;font-weight:normal;font-style:normal;color:#6e6e6e;font-family:'Liberation Sans', sans-serif;">Directed Forwarding Configuration Client</div>
<div class="t" style="left:308.5px;top:351px;font-size:13px;line-height:13px;font-weight:normal;font-style:normal;color:#6e6e6e;font-family:'Liberation Mono', monospace;">0x0007</div>
<svg class="a" style="left:19px;top:376px" width="24" height="24" viewBox="0 0 24 24" fill="#7bb6e8" stroke="#7bb6e8" stroke-width="0"><rect x="1" y="15" width="22" height="2"/><rect x="3" y="8" width="2" height="10.8"/><rect x="19" y="8" width="2" height="10.8"/><path d="M4.5 9.6Q12 14.6 19.5 9.6" fill="none" stroke-width="1.2"/><path d="M7.3 11.5V15M10.5 12.6V15M13.6 12.6V15M16.8 11.5V15" fill="none" stroke-width="1.1"/></svg>
<div class="t n" style="left:47px;top:383px;font-size:12.7px;line-height:12.7px;font-weight:normal;font-style:normal;color:#6e6e6e;font-family:'Liberation Sans', sans-serif;">Bridge Configuration Server</div>
<div class="t" style="left:308.5px;top:383px;font-size:13px;line-height:13px;font-weight:normal;font-style:normal;color:#6e6e6e;font-family:'Liberation Mono', monospace;">0x0008</div>
<svg class="a" style="left:19px;top:408px" width="24" height="24" viewBox="0 0 24 24" fill="#7bb6e8" stroke="#7bb6e8" stroke-width="0"><rect x="1" y="15" width="22" height="2"/><rect x="3" y="8" width="2" height="10.8"/><rect x="19" y="8" width="2" height="10.8"/><path d="M4.5 9.6Q12 14.6 19.5 9.6" fill="none" stroke-width="1.2"/><path d="M7.3 11.5V15M10.5 12.6V15M13.6 12.6V15M16.8 11.5V15" fill="none" stroke-width="1.1"/></svg>
<div class="t n" style="left:47px;top:415px;font-size:12.7px;line-height:12.7px;font-weight:normal;font-style:normal;color:#6e6e6e;font-family:'Liberation Sans', sans-serif;">Bridge Configuration Client</div>
<div class="t" style="left:308.5px;top:415px;font-size:13px;line-height:13px;font-weight:normal;font-style:normal;color:#6e6e6e;font-family:'Liberation Mono', monospace;">0x0009</div>
<svg class="a" style="left:19px;top:440px" width="24" height="24" viewBox="0 0 24 24" fill="#0086d9" stroke="#0086d9" stroke-width="0"><circle cx="12" cy="11.2" r="2.5"/><rect x="10.9" y="11" width="2.2" height="10.8" rx="0.3"/><path d="M7.6 6.9A6.5 6.5 0 0 0 7.6 15" fill="none" stroke-width="1.8" stroke-linecap="round"/><path d="M16.4 6.9A6.5 6.5 0 0 1 16.4 15" fill="none" stroke-width="1.8" stroke-linecap="round"/><path d="M4.8 4.5A10 10 0 0 0 4.8 17" fill="none" stroke-width="1.8" stroke-linecap="round"/><path d="M19.2 4.5A10 10 0 0 1 19.2 17" fill="none" stroke-width="1.8" stroke-linecap="round"/></svg>
<div class="t n" style="left:47px;top:447px;font-size:12.7px;line-height:12.7px;font-weight:normal;font-style:normal;color:#1e1e1e;font-family:'Liberation Sans', sans-serif;">Mesh Private Beacon Server</div>
<div class="t" style="left:308.5px;top:447px;font-size:13px;line-height:13px;font-weight:normal;font-style:normal;color:#111;font-family:'Liberation Mono', monospace;">0x000a</div>
<svg class="a" style="left:19px;top:472px" width="24" height="24" viewBox="0 0 24 24" fill="#0086d9" stroke="#0086d9" stroke-width="0"><circle cx="12" cy="11.2" r="2.5"/><rect x="10.9" y="11" width="2.2" height="10.8" rx="0.3"/><path d="M7.6 6.9A6.5 6.5 0 0 0 7.6 15" fill="none" stroke-width="1.8" stroke-linecap="round"/><path d="M16.4 6.9A6.5 6.5 0 0 1 16.4 15" fill="none" stroke-width="1.8" stroke-linecap="round"/><path d="M4.8 4.5A10 10 0 0 0 4.8 17" fill="none" stroke-width="1.8" stroke-linecap="round"/><path d="M19.2 4.5A10 10 0 0 1 19.2 17" fill="none" stroke-width="1.8" stroke-linecap="round"/></svg>
<div class="t n" style="left:47px;top:479px;font-size:12.7px;line-height:12.7px;font-weight:normal;font-style:normal;color:#1e1e1e;font-family:'Liberation Sans', sans-serif;">Mesh Private Beacon Client</div>
<div class="t" style="left:308.5px;top:479px;font-size:13px;line-height:13px;font-weight:normal;font-style:normal;color:#111;font-family:'Liberation Mono', monospace;">0x000b</div>
<svg class="a" style="left:19px;top:505px" width="24" height="24" viewBox="0 0 24 24" fill="#7bb6e8" stroke="#7bb6e8" stroke-width="0"><path d="M7 12l-2-2-2 2 2 2 2-2zm10.71-4.29L12 2h-1v7.59L6.41 5 5 6.41 10.59 12 5 17.59 6.41 19 11 14.41V22h1l5.710-5.71-4.3-4.29 4.3-4.29zM13 5.83l1.88 1.88L13 9.59V5.83zm1.88 10.46L13 18.17v-3.76l1.88 1.88zM19 10l-2 2 2 2 2-2-2-2z"/></svg>
<div class="t n" style="left:47px;top:511px;font-size:12.7px;line-height:12.7px;font-weight:normal;font-style:normal;color:#6e6e6e;font-family:'Liberation Sans', sans-serif;">On-Demand Private Proxy Server</div>
<div class="t" style="left:308.5px;top:511px;font-size:13px;line-height:13px;font-weight:normal;font-style:normal;color:#6e6e6e;font-family:'Liberation Mono', monospace;">0x000c</div>
<svg class="a" style="left:19px;top:537px" width="24" height="24" viewBox="0 0 24 24" fill="#7bb6e8" stroke="#7bb6e8" stroke-width="0"><path d="M7 12l-2-2-2 2 2 2 2-2zm10.71-4.29L12 2h-1v7.59L6.41 5 5 6.41 10.59 12 5 17.59 6.41 19 11 14.41V22h1l5.710-5.71-4.3-4.29 4.3-4.29zM13 5.83l1.88 1.88L13 9.59V5.83zm1.88 10.46L13 18.17v-3.76l1.88 1.88zM19 10l-2 2 2 2 2-2-2-2z"/></svg>
<div class="t n" style="left:47px;top:543px;font-size:12.7px;line-height:12.7px;font-weight:normal;font-style:normal;color:#6e6e6e;font-family:'Liberation Sans', sans-serif;">On-Demand Private Proxy Client</div>
<div class="t" style="left:308.5px;top:543px;font-size:13px;line-height:13px;font-weight:normal;font-style:normal;color:#6e6e6e;font-family:'Liberation Mono', monospace;">0x000d</div>
<svg class="a" style="left:19px;top:568px" width="24" height="24" viewBox="0 0 24 24" fill="#7bb6e8" stroke="#7bb6e8" stroke-width="0"><rect x="3" y="13" width="7.9" height="1.8"/><rect x="3" y="16.1" width="7.9" height="1.9"/><rect x="3" y="19" width="7.9" height="1.9"/><rect x="13.1" y="16.1" width="7.9" height="1.9"/><rect x="13.1" y="19" width="7.9" height="1.9"/><path d="M6.9 10.5V7.6Q6.9 6.1 8.4 6.1H15.3Q16.8 6.1 16.8 7.6V11" fill="none" stroke-width="2"/><path d="M13.7 10H20L16.85 13.1Z"/></svg>
<div class="t n" style="left:47px;top:575px;font-size:12.7px;line-height:12.7px;font-weight:normal;font-style:normal;color:#6e6e6e;font-family:'Liberation Sans', sans-serif;">SAR Configuration Server</div>
<div class="t" style="left:308.5px;top:575px;font-size:13px;line-height:13px;font-weight:normal;font-style:normal;color:#6e6e6e;font-family:'Liberation Mono', monospace;">0x000e</div>
<svg class="a" style="left:19px;top:600px" width="24" height="24" viewBox="0 0 24 24" fill="#7bb6e8" stroke="#7bb6e8" stroke-width="0"><rect x="3" y="13" width="7.9" height="1.8"/><rect x="3" y="16.1" width="7.9" height="1.9"/><rect x="3" y="19" width="7.9" height="1.9"/><rect x="13.1" y="16.1" width="7.9" height="1.9"/><rect x="13.1" y="19" width="7.9" height="1.9"/><path d="M6.9 10.5V7.6Q6.9 6.1 8.4 6.1H15.3Q16.8 6.1 16.8 7.6V11" fill="none" stroke-width="2"/><path d="M13.7 10H20L16.85 13.1Z"/></svg>
<div class="t n" style="left:47px;top:607px;font-size:12.7px;line-height:12.7px;font-weight:normal;font-style:normal;color:#6e6e6e;font-family:'Liberation Sans', sans-serif;">SAR Configuration Client</div>
<div class="t" style="left:308.5px;top:607px;font-size:13px;line-height:13px;font-weight:normal;font-style:normal;color:#6e6e6e;font-family:'Liberation Mono', monospace;">0x000f</div>
<svg class="a" style="left:19px;top:632px" width="24" height="24" viewBox="0 0 24 24" fill="#7bb6e8" stroke="#7bb6e8" stroke-width="0"><rect x="2.1" y="8" width="4.9" height="1.8"/><rect x="2.1" y="12.1" width="4.9" height="1.8"/><rect x="2.1" y="16.1" width="4.9" height="1.9"/><rect x="9" y="12.1" width="3.5" height="1.8"/><path d="M12 10L15 13L12 16Z"/><rect x="17.1" y="10" width="4.9" height="5.9"/></svg>
<div class="t n" style="left:47px;top:639px;font-size:12.7px;line-height:12.7px;font-weight:normal;font-style:normal;color:#6e6e6e;font-family:'Liberation Sans', sans-serif;">Opcodes Aggregator Server</div>
<div class="t" style="left:308.5px;top:639px;font-size:13px;line-height:13px;font-weight:normal;font-style:normal;color:#6e6e6e;font-family:'Liberation Mono', monospace;">0x0010</div>
<svg class="a" style="left:19px;top:664px" width="24" height="24" viewBox="0 0 24 24" fill="#7bb6e8" stroke="#7bb6e8" stroke-width="0"><rect x="2.1" y="8" width="4.9" height="1.8"/><rect x="2.1" y="12.1" width="4.9" height="1.8"/><rect x="2.1" y="16.1" width="4.9" height="1.9"/><rect x="9" y="12.1" width="3.5" height="1.8"/><path d="M12 10L15 13L12 16Z"/><rect x="17.1" y="10" width="4.9" height="5.9"/></svg>
<div class="t n" style="left:47px;top:671px;font-size:12.7px;line-height:12.7px;font-weight:normal;font-style:normal;color:#6e6e6e;font-family:'Liberation Sans', sans-serif;">Opcodes Aggregator Client</div>
<div class="t" style="left:308.5px;top:671px;font-size:13px;line-height:13px;font-weight:normal;font-style:normal;color:#6e6e6e;font-family:'Liberation Mono', monospace;">0x0011</div>
<svg class="a" style="left:17.8px;top:695.8px" width="26.4" height="26.4" viewBox="0 0 24 24" fill="#7bb6e8"><path d="M4 6H2v14c0 1.1.9 2 2 2h14v-2H4V6zm16-4H8c-1.1 0-2 .9-2 2v12c0 1.1.9 2 2 2h12c1.1 0 2-.9 2-2V4c0-1.1-.9-2-2-2zm-1 9H9V9h10v2zm-4 4H9v-2h6v2zm4-8H9V5h10v2z"/></svg>
<div class="t n" style="left:47px;top:703px;font-size:12.7px;line-height:12.7px;font-weight:normal;font-style:normal;color:#6e6e6e;font-family:'Liberation Sans', sans-serif;">Large Composition Data Server</div>
<div class="t" style="left:308.5px;top:703px;font-size:13px;line-height:13px;font-weight:normal;font-style:normal;color:#6e6e6e;font-family:'Liberation Mono', monospace;">0x0012</div>
<div class="a" style="left:3px;top:26px;width:1328px;height:48px;background:#fff"></div>
<div class="a" style="left:3px;top:74px;width:1328px;height:11px;background:linear-gradient(rgba(0,0,0,.25),rgba(0,0,0,.12) 35%,rgba(0,0,0,.03) 85%,rgba(0,0,0,0))"></div>
<div class="t" style="left:28px;top:40px;font-size:19px;line-height:19px;font-weight:bold;font-style:normal;color:#111;font-family:'Liberation Sans', sans-serif;">Bluetooth Mesh Configurator</div>
<div class="a" style="left:419px;top:652px;width:23px;height:23px;box-sizing:border-box;border:1px solid #0086d9;border-radius:3px"></div>
<svg class="a" style="left:423px;top:658px;" width="15" height="11" viewBox="0 0 15 11"><rect x="1" y="1" width="13" height="9" rx="1.5" fill="none" stroke="#0086d9" stroke-width="2"/><rect x="9" y="1" width="5" height="9" fill="#0086d9"/></svg>
<svg class="a" style="left:448.5px;top:656px;" width="13" height="15" viewBox="0 0 13 15"><path d="M1.5 0H8.5L12.5 4V13.5Q12.5 15 11 15H1.5Q0 15 0 13.5V1.5Q0 0 1.5 0Z" fill="#0086d9"/><path d="M8.5 0V4H12.5" fill="#fff" opacity="0.5"/><rect x="3" y="4" width="2" height="5.5" fill="#fff"/><rect x="3" y="11" width="2" height="2" fill="#fff"/></svg>
<div class="t" style="left:468px;top:657px;font-size:13px;line-height:13px;font-weight:bold;font-style:normal;color:#0086d9;font-family:'Liberation Sans', sans-serif;">Problems</div>
<div class="t" style="left:419.5px;top:687px;font-size:11px;line-height:11px;font-weight:bold;font-style:normal;color:#111;font-family:'Liberation Sans', sans-serif;">Description</div>
<div class="a" style="left:441px;top:324px;width:335px;height:327px;box-sizing:border-box;border:5px solid #e42a0c"></div>
</body></html>
